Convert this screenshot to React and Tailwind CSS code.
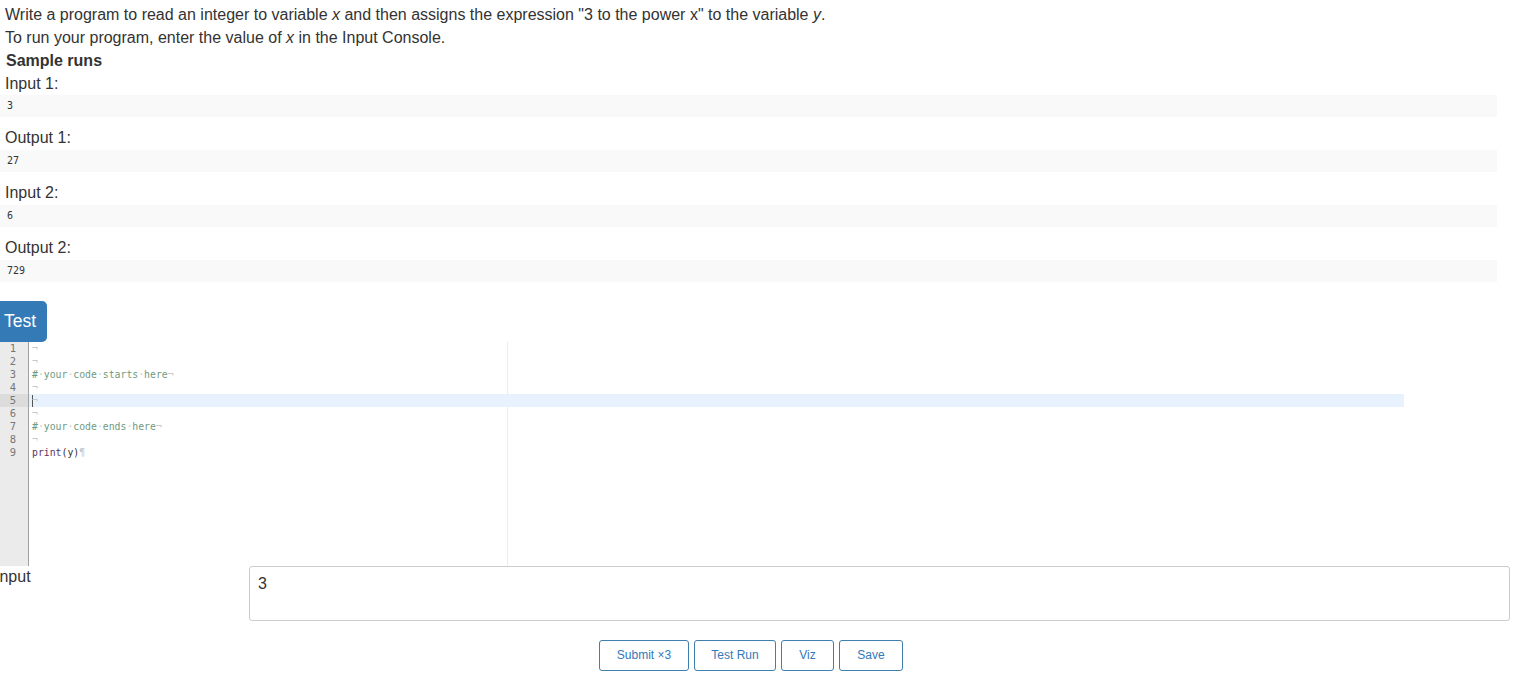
import React from "react";

const sample = [
  { label: "Input 1:", value: "3" },
  { label: "Output 1:", value: "27" },
  { label: "Input 2:", value: "6" },
  { label: "Output 2:", value: "729" },
];

const Dot = () => <span className="text-[#c8c8c8]">·</span>;
const Eol = () => <span className="text-[#c8c8c8]">¬</span>;

const codeLines = [
  [<Eol key="e" />],
  [<Eol key="e" />],
  [
    <span key="c" className="text-[#6f9a80]">
      #<Dot />your<Dot />code<Dot />starts<Dot />here
    </span>,
    <Eol key="e" />,
  ],
  [<Eol key="e" />],
  [
    <span key="cur" className="inline-block w-px h-[12px] bg-[#555] align-middle -mr-px" />,
    <Eol key="e" />,
  ],
  [<Eol key="e" />],
  [
    <span key="c" className="text-[#6f9a80]">
      #<Dot />your<Dot />code<Dot />ends<Dot />here
    </span>,
    <Eol key="e" />,
  ],
  [<Eol key="e" />],
  [
    <span key="p" className="text-[#5b3564]">print</span>,
    <span key="r" className="text-[#333]">(y)</span>,
    <span key="e" className="text-[#c8c8c8]">¶</span>,
  ],
];

const CodeEditor = () => {
  return (
    <div className="relative flex w-[1404px] h-[224px] font-['DejaVu_Sans_Mono',monospace] text-[9.8px] leading-[13px]">
      {/* gutter */}
      <div className="w-[29px] shrink-0 bg-[#ebebeb] border-r border-[#a0a0a0] text-[#777] text-[10.5px]">
        {codeLines.map((_, i) => (
          <div
            key={i}
            className={`h-[13px] pr-[12px] text-right ${i === 4 ? "bg-[#dcdcdc]" : ""}`}
          >
            {i + 1}
          </div>
        ))}
      </div>
      {/* text area */}
      <div className="relative flex-1">
        <div className="absolute top-0 bottom-0 left-[478px] w-px bg-[#ececec]" />
        {codeLines.map((parts, i) => (
          <div
            key={i}
            className={`relative h-[13px] pl-[3px] whitespace-pre ${i === 4 ? "bg-[#e8f2fe]" : ""}`}
          >
            {parts}
          </div>
        ))}
      </div>
    </div>
  );
};

const App = () => {
  return (
    <div className="min-h-[686px] bg-white text-[#333] font-['Liberation_Sans',Arial,sans-serif] text-[16px] leading-[22.86px] overflow-hidden">
      <div className="pt-[4px]">
        <p className="pl-[5px]">
          Write a program to read an integer to variable <i>x</i> and then assigns the
          expression "3 to the power x" to the variable <i>y</i>.
        </p>
        <p className="pl-[5px]">
          To run your program, enter the value of <i>x</i> in the Input Console.
        </p>
        <p className="pl-[6px] font-bold">Sample runs</p>
        {sample.map((s) => (
          <div key={s.label}>
            <p className="pl-[5px]">{s.label}</p>
            <pre className="w-[1497px] h-[22px] mb-[10px] bg-[#f9f9f9] pl-[7px] font-['DejaVu_Sans_Mono',monospace] text-[10px] leading-[22px] text-[#333]">
              {s.value}
            </pre>
          </div>
        ))}
      </div>

      <div className="mt-[19px]">
        <button className="w-[54px] h-[41px] -ml-[7px] bg-[#337ab7] text-white text-[17.5px] rounded-[5px] flex items-center justify-center">
          Test
        </button>
      </div>

      <CodeEditor />

      <div className="flex h-[55px]">
        <div className="w-[249px] shrink-0 leading-[22px]">
          <span className="block -ml-[5px]">Input</span>
        </div>
        <textarea
          defaultValue="3"
          className="w-[1261px] h-[55px] border border-[#cccccc] rounded-[3px] px-[8px] py-[6px] text-[16px] leading-[22px] resize-none outline-none font-['Liberation_Sans',Arial,sans-serif] text-[#333]"
        />
      </div>

      <div className="flex justify-center gap-[5px] pt-[19px] pr-[17px] text-[12px]">
        <button className="w-[90px] h-[31px] border border-[#3f7fae] rounded-[3px] text-[#337ab7] bg-white">
          Submit ×3
        </button>
        <button className="w-[82px] h-[31px] border border-[#3f7fae] rounded-[3px] text-[#337ab7] bg-white">
          Test Run
        </button>
        <button className="w-[53px] h-[31px] border border-[#3f7fae] rounded-[3px] text-[#337ab7] bg-white">
          Viz
        </button>
        <button className="w-[64px] h-[31px] border border-[#3f7fae] rounded-[3px] text-[#337ab7] bg-white">
          Save
        </button>
      </div>
    </div>
  );
};

export default App;
